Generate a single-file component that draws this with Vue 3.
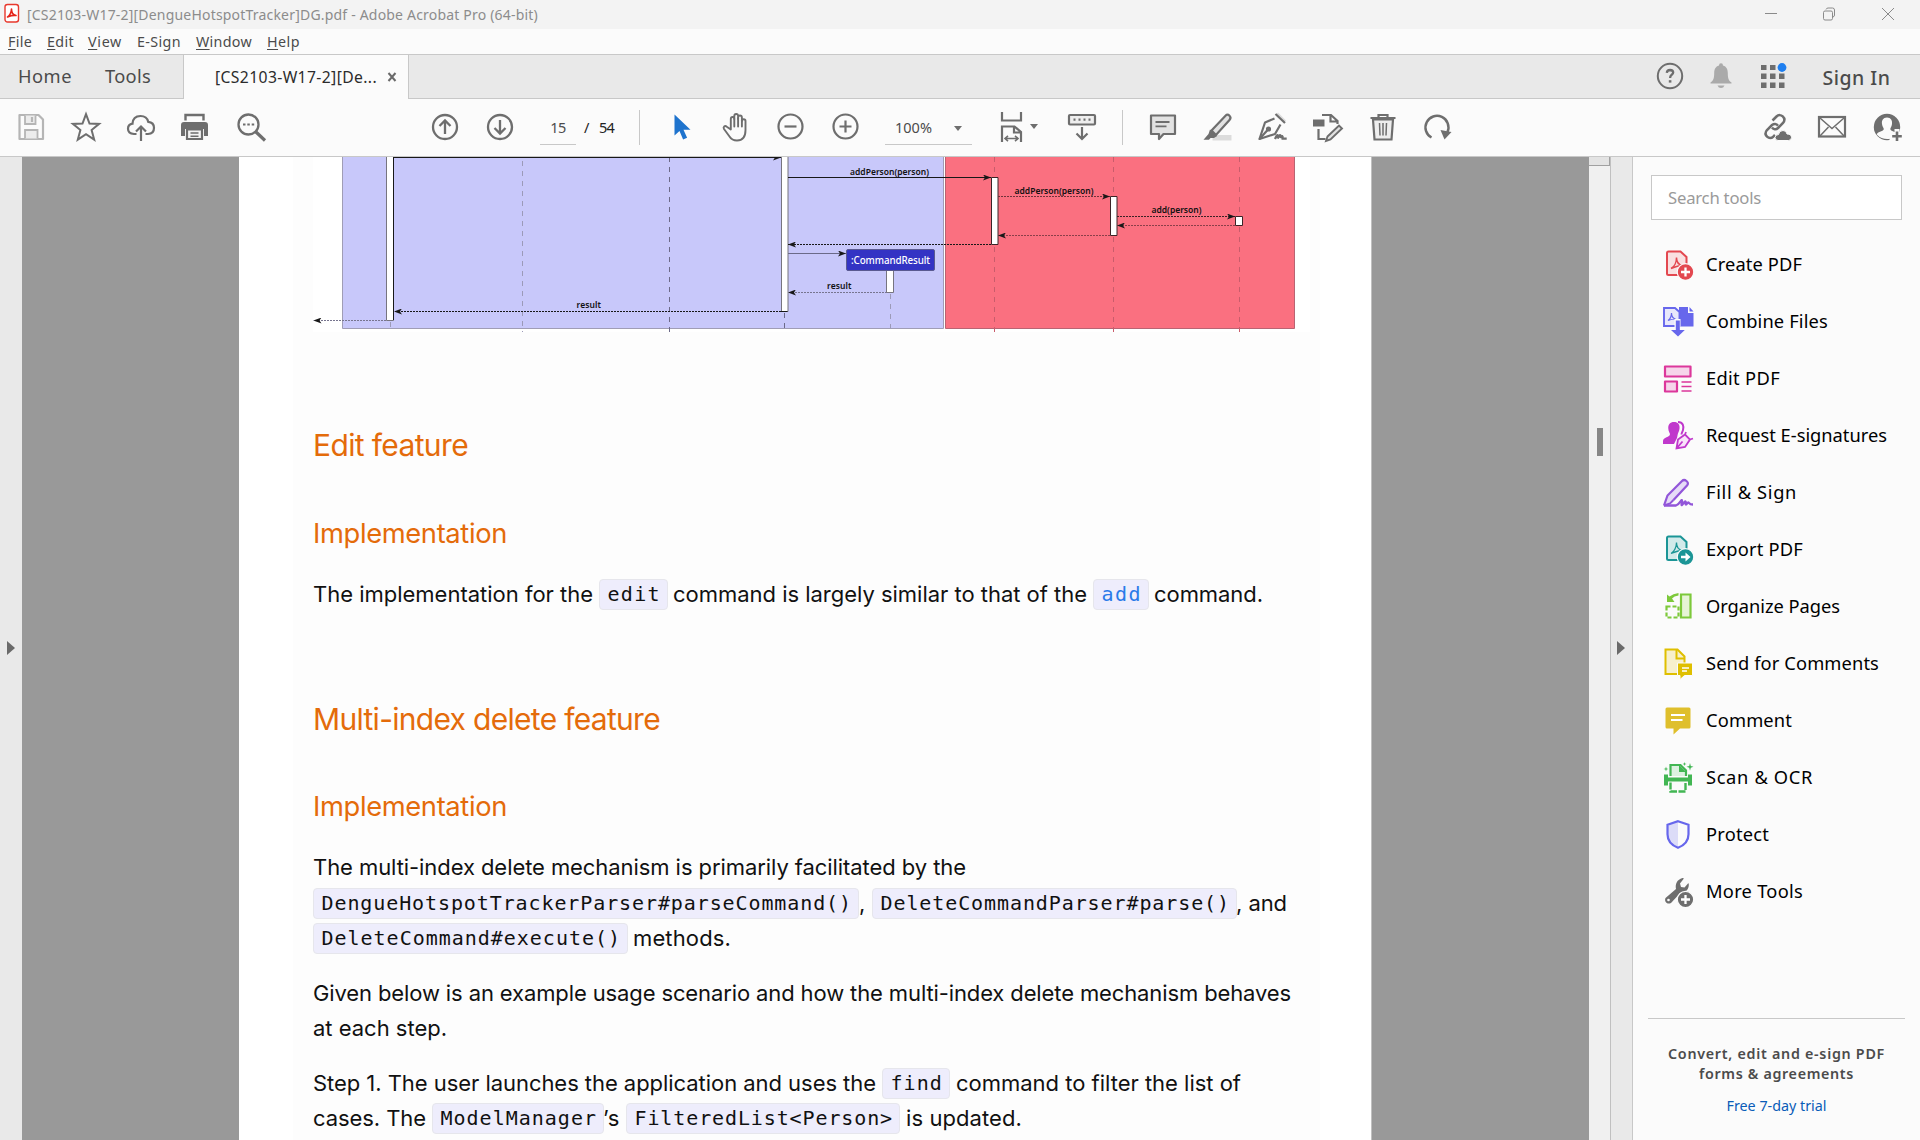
<script setup>
const menus = [
  { key: 'F', rest: 'ile', left: 8, w: 24 },
  { key: 'E', rest: 'dit', left: 47, w: 27 },
  { key: 'V', rest: 'iew', left: 88, w: 34 },
  { key: '', rest: 'E-Sign', left: 137, w: 44 },
  { key: 'W', rest: 'indow', left: 196, w: 56 },
  { key: 'H', rest: 'elp', left: 267, w: 33 },
]

const tools = [
  { id: 'create', label: 'Create PDF', w: 96 },
  { id: 'combine', label: 'Combine Files', w: 122 },
  { id: 'edit', label: 'Edit PDF', w: 74 },
  { id: 'request', label: 'Request E-signatures', w: 181 },
  { id: 'fill', label: 'Fill & Sign', w: 91 },
  { id: 'export', label: 'Export PDF', w: 97 },
  { id: 'organize', label: 'Organize Pages', w: 134 },
  { id: 'send', label: 'Send for Comments', w: 173 },
  { id: 'comment', label: 'Comment', w: 86 },
  { id: 'scan', label: 'Scan & OCR', w: 107 },
  { id: 'protect', label: 'Protect', w: 63 },
  { id: 'more', label: 'More Tools', w: 97 },
]

// Each run is { t: text, x: left edge, w: width, code?: chip, link?: blue text }.
const rows = {
  edit: [
    { t: 'The implementation for the', x: 313, w: 280 },
    { t: 'edit', x: 599, w: 69, code: true },
    { t: 'command is largely similar to that of the', x: 673, w: 414 },
    { t: 'add', x: 1093, w: 56, code: true, link: true },
    { t: 'command.', x: 1154, w: 109 },
  ],
  intro: [
    [{ t: 'The multi-index delete mechanism is primarily facilitated by the', x: 313, w: 653 }],
    [
      { t: 'DengueHotspotTrackerParser#parseCommand()', x: 313, w: 546, code: true },
      { t: ',', x: 859, w: 6 },
      { t: 'DeleteCommandParser#parse()', x: 872, w: 365, code: true },
      { t: ', and', x: 1236, w: 51 },
    ],
    [
      { t: 'DeleteCommand#execute()', x: 313, w: 315, code: true },
      { t: 'methods.', x: 633, w: 98 },
    ],
  ],
  given: [
    [{ t: 'Given below is an example usage scenario and how the multi-index delete mechanism behaves', x: 313, w: 978 }],
    [{ t: 'at each step.', x: 313, w: 134 }],
  ],
  step: [
    [
      { t: 'Step 1. The user launches the application and uses the', x: 313, w: 563 },
      { t: 'find', x: 882, w: 68, code: true },
      { t: 'command to filter the list of', x: 956, w: 285 },
    ],
    [
      { t: 'cases. The', x: 313, w: 113 },
      { t: 'ModelManager', x: 432, w: 172, code: true },
      { t: '’s', x: 603, w: 17 },
      { t: 'FilteredList<Person>', x: 626, w: 274, code: true },
      { t: 'is updated.', x: 906, w: 116 },
    ],
  ],
}

const paragraphs = [rows.intro, rows.given, rows.step]

const gapBefore = (row, i) => row[i].x - (i ? row[i - 1].x + row[i - 1].w : 313)

// Spreads letter-spacing so that a run fills exactly the width given.
const vFit = {
  mounted(el, { value }) {
    const range = document.createRange()
    range.selectNodeContents(el)
    const natural = range.getBoundingClientRect().width
    el.style.letterSpacing = `${((value - natural) / el.textContent.length).toFixed(3)}px`
  },
}
</script>

<template>
  <div class="app">
    <header class="titlebar">
      <svg class="logo" width="18" height="24" viewBox="0 0 18 24">
        <rect x="1" y="2.500" width="13.500" height="17.500" rx="2.5" fill="#fff" stroke="#e8382d" stroke-width="1.4" />
        <path d="M3.500 15c2-1 4-4.500 4-8 0 4 2 6 4.500 6.500-4-.5-6 .5-8.500 1.500z" fill="none" stroke="#e5251b" stroke-width="1.600" stroke-linejoin="round" />
      </svg>
      <span class="title"><span v-fit="511">[CS2103-W17-2][DengueHotspotTracker]DG.pdf - Adobe Acrobat Pro (64-bit)</span></span>
      <svg class="winbtns" width="140" height="29" viewBox="1760 0 140 29" fill="none" stroke="#8a8a8a">
        <path d="M1765 13.500h12" />
        <rect x="1823.500" y="11" width="9" height="9" rx="1.500" />
        <path d="M1826 9.500q.5-1.500 2-1.500h4.500q2 0 2 2v5q0 1.500-1.500 2" />
        <path d="M1882 8l12 12M1894 8l-12 12" />
      </svg>
    </header>

    <nav class="menubar">
      <span v-for="(m, i) in menus" :key="m.rest" class="menu" :style="{ marginLeft: (i ? m.left - menus[i - 1].left - menus[i - 1].w : m.left) + 'px', width: m.w + 'px' }"><span v-fit="m.w"><u v-if="m.key">{{ m.key }}</u>{{ m.rest }}</span></span>
    </nav>

    <div class="tabs">
      <div class="fixed-tabs">
        <span class="home"><span v-fit="54">Home</span></span>
        <span class="tooltab"><span v-fit="46">Tools</span></span>
      </div>
      <div class="doc-tab">
        <span class="doc-name"><span v-fit="162">[CS2103-W17-2][De...</span></span>
        <svg width="11" height="11" viewBox="0 0 11 11"><path d="M1.500 1l7 8M8.500 1l-7 8" stroke="#6a6a6a" stroke-width="2" /></svg>
      </div>
      <div class="tab-right">
        <svg class="help" width="28" height="28" viewBox="0 0 28 28" fill="none" stroke="#6e6e6e">
          <circle cx="14" cy="14" r="12.200" stroke-width="2" />
          <path d="M10.800 10.800q.2-2.800 3.300-2.800 3.100.1 3.100 2.600c0 1.900-3 2.300-3 4.700v.7" stroke-width="2.300" />
          <path d="M12.800 18.200h2.600v2.400h-2.600z" fill="#6e6e6e" stroke="none" />
        </svg>
        <svg class="bell" width="22" height="26" viewBox="0 0 22 26" fill="#aaa">
          <path d="M9 2.500q0-2.200 2-2.200t2 2.200c3.500 1 4.800 4 4.800 7.500 0 5 .7 7.500 3.700 9.500v1H.5v-1c3-2 3.700-4.500 3.700-9.500C4.200 6.500 5.500 3.500 9 2.500zM7.500 22.500h7q-1 2.600-3.500 2.600t-3.500-2.600z" />
        </svg>
        <svg class="grid" width="28" height="28" viewBox="0 0 28 28" fill="#6e6e6e">
          <path d="M1 4h5.500v5H1zM10 4h5.500v5H10zM1 12.500h5.500v5.500H1zM10 12.500h5.500v5.500H10zM19 12.500h5.500v5.500H19zM1 21.500h5.500v5.500H1zM10 21.500h5.500v5.500H10zM19 21.500h5.500v5.500H19z" />
          <circle cx="22" cy="6.500" r="4.400" fill="#1f7ff0" />
        </svg>
        <span class="signin"><span v-fit="68">Sign In</span></span>
      </div>
    </div>

    <div class="toolbar">
      <div class="icons file-icons">
        <svg viewBox="0 0 32 32" fill="none" stroke="#b5b5b5" stroke-width="2.200">
          <path d="M4.500 4h19l4.500 4.500V28H4.500z" stroke-linejoin="round" />
          <path d="M10 4.500v8.500h10.500V4.500M10 27.500V19h12.500v8.500" fill="#ececec" stroke-width="1.800" /><path d="M17 6v5" />
        </svg>
        <svg viewBox="0 0 32 32" fill="none" stroke="#6e6e6e" stroke-width="2"><path d="M16 3.200l3.500 9.300 9.600.4-7.500 6.100 2.600 9.600L16 23.200l-8.200 5.400L10.400 19l-7.500-6.100 9.600-.4z" /></svg>
        <svg viewBox="0 0 32 32" fill="none" stroke="#6e6e6e" stroke-width="2.200">
          <path d="M11.500 23H9q-6-.5-6-5.300 0-4.200 4.500-5C7.800 7.500 11 5 15.500 5c4.500 0 7 2.500 7.700 5.800 4 .4 5.800 2.800 5.800 6 0 4-2.500 6.200-6 6.200h-2.500" />
          <path d="M16 30V16.500M11 20.500l5-5 5 5" />
        </svg>
        <svg viewBox="0 0 32 32" fill="#6e6e6e">
          <path d="M1 14q0-3 3-3h21q3 0 3 3v11h-4v-7H5v7H1z" /><path d="M5.500 9.500V4h18v5.500" fill="none" stroke="#6e6e6e" stroke-width="2.400" />
          <path d="M7 18.500h15V28H7z" fill="#f4f4f4" stroke="#6e6e6e" stroke-width="2.200" /><path d="M10.500 22h8M10.500 25.200h8" stroke="#6e6e6e" stroke-width="1.400" />
        </svg>
        <svg viewBox="0 0 32 32" fill="none" stroke="#6e6e6e">
          <circle cx="13.500" cy="13.500" r="10" stroke-width="2.300" /><path d="M21 21l9 8.500" stroke-width="3.200" /><path d="M8 13.500h2.500M12.300 13.500h2.500M16.700 13.500h2.500" stroke-width="2.200" />
        </svg>
      </div>
      <div class="icons nav-icons">
        <svg viewBox="0 0 32 32" fill="none" stroke="#6e6e6e" stroke-width="2.300"><circle cx="16" cy="16" r="12" /><path d="M16 23V10M10.500 15l5.500-5.500 5.500 5.500" /></svg>
        <svg viewBox="0 0 32 32" fill="none" stroke="#6e6e6e" stroke-width="2.300"><circle cx="16" cy="16" r="12" /><path d="M16 9v13M10.500 17l5.500 5.500 5.500-5.500" /></svg>
      </div>
      <span class="page-input">15</span>
      <span class="slash">/</span>
      <span class="total">54</span>
      <i class="sep sep-a"></i>
      <div class="icons view-icons">
        <svg viewBox="0 0 32 32"><path d="M9.500 3.500v21l5-4.600 3.600 8.600 4-1.800-3.600-8h7z" fill="#1e73cd" /></svg>
        <svg viewBox="0 0 32 32" fill="none" stroke="#6e6e6e" stroke-width="1.900" stroke-linejoin="round" stroke-linecap="round">
          <path d="M10.800 18.500V8q0-2 1.800-2 1.700 0 1.700 2V5q0-2 1.900-2t1.900 2v3-1.500q0-2 1.900-2t1.900 2V10q0-1.800 1.800-1.800t1.800 1.800v9c0 7-3.500 10.500-8.500 10.500-4 0-6-1.500-7.500-4l-5.500-7.500c-1.200-2 .8-3.800 2.800-2.300z" />
          <path d="M14.300 8v7.500M18.100 7v8.500M21.900 9v6.500" />
        </svg>
        <svg viewBox="0 0 32 32" fill="none" stroke="#6e6e6e" stroke-width="2.200"><circle cx="15.500" cy="15.500" r="12" /><path d="M9.500 15.500h12" /></svg>
        <svg viewBox="0 0 32 32" fill="none" stroke="#6e6e6e" stroke-width="2.200"><circle cx="15.500" cy="15.500" r="12" /><path d="M9.500 15.500h12M15.500 9.500v12" /></svg>
      </div>
      <div class="zoom"><span class="pct"><span v-fit="37">100%</span></span><i class="caret"></i></div>
      <svg class="fit" width="24" height="32" viewBox="0 0 24 32" fill="none" stroke="#6e6e6e" stroke-width="2.200">
        <path d="M2 1v8.500h19V1M2 31V15.500h12.500L21 21v10M14 15.500v6h7" /><path d="M5.500 27.500h12M8 24.800l-3 2.700 3 2.700M15 24.800l3 2.700-3 2.700" stroke-width="1.600" />
      </svg>
      <i class="caret fit-caret"></i>
      <svg class="kbd" width="32" height="32" viewBox="0 0 32 32" fill="none" stroke="#6e6e6e" stroke-width="2.200">
        <rect x="3" y="4" width="26" height="9.500" rx="1" fill="#eee" /><path d="M7.500 8.700h2M12.500 8.700h2M17.500 8.700h2M22.500 8.700h2" /><path d="M16 16v11.500M10.500 22.500L16 28l5.500-5.500" />
      </svg>
      <i class="sep sep-b"></i>
      <div class="icons mark-icons">
        <svg viewBox="0 0 32 32" fill="#e2e2e2" stroke="#6e6e6e" stroke-width="2.200" stroke-linejoin="round"><path d="M4 4.500h24V23H16.500L12 28v-5H4z" /><path d="M8.500 11h14M8.500 15.300h11" stroke-width="1.800" /></svg>
        <svg viewBox="0 0 32 32"><path d="M10.500 24h19v5.500h-19z" fill="#dcdcdc" /><path d="M9.500 19.500L23.500 4.700q2-2 4 0t0 4.200L14 24z" fill="#e2e2e2" stroke="#6e6e6e" stroke-width="2.200" /><path d="M8 18.500l7 6.500-3 2H8.500L7 28.800H1.500L6.500 23z" fill="#6e6e6e" /></svg>
        <svg viewBox="0 0 32 32" fill="none" stroke="#6e6e6e" stroke-width="2.200"><path d="M19 3.500l8 8 2-2-8-8z" fill="#dcdcdc" stroke="none" /><path d="M18.500 3l9.500 9M17.500 7.500L8 11.500 2.500 28 18 23l5.500-9.500" stroke-linejoin="round" /><path d="M2.500 28l8.500-9.500" /><circle cx="11.500" cy="18" r="1.500" fill="#6e6e6e" /><path d="M18 28c2-5 3.500-5.500 2.700-.5 2-4.500 3.500-4.500 2.800-.5 1.500-3 2.500-2.500 2.200.7h4" /></svg>
        <svg viewBox="0 0 32 32" fill="none" stroke="#6e6e6e" stroke-width="2.200"><path d="M6.500 18v10h7M10 4h9l6.500 6v3M18.500 4v6.500h7" /><path d="M1 8.500h11.500V15.500H1z" fill="#6e6e6e" stroke="none" /><path d="M15.500 25.500L27 14.500l3 3L18.500 28.500 14 30z" fill="#e2e2e2" stroke-width="1.900" /></svg>
        <svg viewBox="0 0 32 32" fill="none" stroke="#6e6e6e" stroke-width="2.200"><path d="M6 8.500h20L24.500 28.500h-17z" fill="#eee" /><path d="M3.500 7h25M11.500 6.500V4h9v2.500" /><path d="M12.500 12l.5 12.500M16 12v12.500M19.500 12l-.5 12.500" stroke-width="1.500" /></svg>
        <svg viewBox="0 0 32 32" fill="none" stroke="#6e6e6e" stroke-width="2.500"><path d="M9.500 26.500A11.500 11.500 0 1 1 25.500 21" /><path d="M18.500 19l4 9.500 7-7.500z" fill="#6e6e6e" stroke="none" /></svg>
      </div>
      <div class="icons share-icons">
        <svg viewBox="0 0 32 32" fill="none" stroke="#6e6e6e" stroke-width="2.500"><path d="M11.500 9.500l4-4c4-4 10.500 1.500 6.500 6.500l-5 5c-2 2-4.500 1.500-6-.5" /><path d="M14 24l-1.500 1.500c-4.500 4-10.500-1.500-6.500-6.500l5-5c2-1.500 4.500-1.500 6 .7" /><path d="M17 29.500q-3-.2-3-3t3.500-3q.5-4 4.500-4 3.500 0 4 3.500 4.500 0 4.500 3.500 0 2.800-3 3z" fill="#6e6e6e" stroke="#fbfbfb" stroke-width="1" /></svg>
        <svg viewBox="0 0 32 32" fill="none" stroke="#6e6e6e" stroke-width="2.200"><rect x="3" y="6" width="26" height="19.500" /><path d="M4 7l12 10.500L28 7M4 25l8.500-9M28 25l-8.500-9" stroke-width="1.500" /></svg>
        <svg viewBox="0 0 32 32"><circle cx="16" cy="16" r="13.200" fill="#6e6e6e" /><path d="M16 6.500c4 0 5.500 3 5 6.500-.3 2.500-1.500 3.500-1.700 5 0 2.500 6 2 7 5.500-3 4-6 4.500-10 4.500s-7.500-1-10.500-4.500c1-3.500 7-3 7-5.500-.2-1.500-1.500-2.500-1.800-5-.5-3.500 1-6.500 5-6.500z" fill="#fbfbfb" /><path d="M18.500 23h5v-5h5v3h4v11h-14z" fill="#fbfbfb" /><path d="M26 20.500v9.500M21.200 25.200h9.600" stroke="#6e6e6e" stroke-width="2.600" /></svg>
      </div>
    </div>

    <main class="body">
      <aside class="left-rail"><i class="tri"></i></aside>
      <section class="canvas">
        <article class="page">
          <div class="sheet">
            <svg class="diagram" width="997" height="175" viewBox="313 157 997 175" font-family="'Noto Sans', 'Open Sans', sans-serif" font-size="8.500" font-weight="600">
              <defs>
                <marker id="tip" viewBox="0 0 8 6" refX="8" refY="3" markerWidth="8" markerHeight="6" markerUnits="userSpaceOnUse" orient="auto">
                  <path d="M0 0L8 3 0 6l2-3z" fill="#181818" />
                </marker>
              </defs>
              <path d="M313 157h997v175H313z" fill="#fff" />
              <path d="M342.500 150h601v178.500h-601z" fill="#c8c8fa" stroke="#a09db5" />
              <path d="M945.500 150h349v178.500h-349z" fill="#fa7080" stroke="#b96473" />
              <g stroke="#6c6a88" stroke-dasharray="5 5" fill="none">
                <path d="M390.500 322v10M522.500 161v171M890.500 294v38" stroke="#9c9ab8" />
                <path d="M669.500 157v175M784.500 313v19" />
                <path d="M994.500 157v175M1113.500 157v175M1239.500 157v175" stroke="#c95c6b" />
              </g>
              <g fill="#fff" stroke="#77757f">
                <path d="M386.500 150h7v170.500h-7zM781.500 150h6.500v161.500h-6.500zM886.500 268h7v24.500h-7z" />
                <path d="M991.500 177.500h6.500v67h-6.500zM1110.500 196.500h6.500v39h-6.500zM1235.500 216.500h7v9h-7z" stroke="#3c2428" />
              </g>
              <g fill="none" stroke="#181818">
                <path d="M393.500 157v163" />
                <path d="M393 157.500h388" marker-end="url(#tip)" />
                <path d="M788 177.500h203" marker-end="url(#tip)" />
                <path d="M788 253.500h58" stroke="#6b6a88" marker-end="url(#tip)" />
                <path d="M781 311.500h6.500" />
                <g stroke-dasharray="2 1">
                  <path d="M998 196.500h112" marker-end="url(#tip)" stroke="#70333b" />
                  <path d="M1117 216.500h118" marker-end="url(#tip)" stroke="#3a2226" />
                  <path d="M1235 225.500h-118" marker-end="url(#tip)" stroke="#8a3f4a" />
                  <path d="M1110 235.500H998" marker-end="url(#tip)" stroke="#8a3f4a" />
                  <path d="M991 244.500H788" marker-end="url(#tip)" />
                  <path d="M887 292.500h-99" marker-end="url(#tip)" stroke="#77758f" />
                  <path d="M781 311.500H394" marker-end="url(#tip)" />
                  <path d="M386 320.500h-72.500" marker-end="url(#tip)" stroke="#77758f" />
                </g>
              </g>
              <rect x="846.500" y="249.500" width="88" height="21" rx="1.500" fill="#3333c4" stroke="#5a5a90" />
              <g fill="#111">
                <text x="850" y="174.500" textLength="79">addPerson(person)</text>
                <text x="1014.500" y="193.800" textLength="79">addPerson(person)</text>
                <text x="1151.500" y="213" textLength="50">add(person)</text>
                <text x="827" y="288.700" textLength="24.500">result</text>
                <text x="576.500" y="308" textLength="24.500">result</text>
              </g>
              <text x="851" y="263.500" textLength="79" fill="#fff" font-size="9.800" font-weight="500">:CommandResult</text>
            </svg>

            <h2 class="h-edit"><span v-fit="155">Edit feature</span></h2>
            <h3 class="h-impl"><span v-fit="194">Implementation</span></h3>
            <div class="row first">
              <span v-for="(s, i) in rows.edit" :key="i" :class="{ run: true, chip: s.code, link: s.link }" :style="{ width: s.w + 'px', marginLeft: gapBefore(rows.edit, i) + 'px' }"><span v-fit="s.code ? s.w - 15.500 : s.w">{{ s.t }}</span></span>
            </div>
            <h2 class="h-multi"><span v-fit="347">Multi-index delete feature</span></h2>
            <h3><span v-fit="194">Implementation</span></h3>
            <div v-for="(p, k) in paragraphs" :key="k" class="para">
              <div v-for="(row, r) in p" :key="r" class="row">
                <span v-for="(s, i) in row" :key="i" :class="{ run: true, chip: s.code }" :style="{ width: s.w + 'px', marginLeft: gapBefore(row, i) + 'px' }"><span v-fit="s.code ? s.w - 15.500 : s.w">{{ s.t }}</span></span>
              </div>
            </div>
          </div>
        </article>
      </section>
      <div class="scroll"><i class="cap"></i><i class="grip"></i></div>
      <div class="right-rail"><i class="tri"></i></div>
      <aside class="panel">
        <div class="search"><span v-fit="93">Search tools</span></div>
        <ul class="tools">
          <li v-for="t in tools" :key="t.id">
            <svg width="32" height="32" viewBox="0 0 32 32" fill="none">
              <template v-if="t.id === 'create'">
                <path d="M5 4q0-1.500 1.500-1.500h12L24.500 8v18H6.500Q5 26 5 24.500z" fill="#f9e0e1" stroke="#e34850" stroke-width="2" />
                <path d="M9 19.500c3-1.500 5.500-6 5.500-11 0 5 3 7.500 6 8-4 0-8 1.500-11.500 3z" stroke="#e34850" stroke-width="1.500" />
                <circle cx="23.500" cy="23" r="8.300" fill="#e34850" stroke="#fbfbfb" stroke-width="1.200" /><path d="M23.500 18.500v9M19 23h9" stroke="#fff" stroke-width="2.300" />
              </template>
              <template v-else-if="t.id === 'combine'">
                <path d="M17 1h9v6h5.500v13.500H17z" fill="#6767ec" /><path d="M27.500 1l4 4.500h-4z" fill="#6767ec" />
                <path d="M2 2h11l4.500 4v14H2z" fill="#e8e8fb" stroke="#6767ec" stroke-width="1.900" /><path d="M6 14.500c2-1.500 3.500-4 3.500-7.500 0 3.500 2 5.500 4 6-3 0-5 .5-7.500 1.500z" stroke="#6767ec" stroke-width="1.200" />
                <path d="M12.500 13h6v10.500h6.500l-9.500 9-9.500-9h6.500z" fill="#fbfbfb" /><path d="M13.800 14.500h4v9.500h5L16 30.500 9 24h4.800z" fill="#6767ec" />
              </template>
              <template v-else-if="t.id === 'edit'">
                <path d="M3 3.500h25.500V13.500H3zM3 18.500h12v10H3z" fill="#f6d5ea" stroke="#dc379b" stroke-width="2.200" stroke-linejoin="round" /><path d="M19.500 19h10M19.500 23.500h10M19.500 28h10" stroke="#dc379b" stroke-width="1.400" />
              </template>
              <template v-else-if="t.id === 'request'">
                <path d="M12 2c4 0 6 2.500 5.500 6.500-.3 3-1.500 4-1.800 6l-.7 3.500-3 6H1v-3c0-4 7-3.500 7-7-.5-1.500-1.500-2.500-1.700-5.500C6 4.500 8 2 12 2z" fill="#c038cc" /><path d="M16 2c5 0 6 4 5 8-.5 2-1.500 3-1.500 4.500" stroke="#c038cc" stroke-width="2" />
                <path d="M14.500 28.500L16 19.500l7-5 5 5-5 7.500zM14.500 28.500l6-7M23 14.500l1-2.500M28 19.500l3-1" fill="#f9e3fa" stroke="#c038cc" stroke-width="1.800" />
              </template>
              <template v-else-if="t.id === 'fill'">
                <path d="M2 28.500l3.500-10L20 4q2-2 4.500 0t.5 4.500L11.500 23" fill="#e6dbf7" stroke="#9256d9" stroke-width="2.200" /><path d="M2 28.500l6-2 3.500-3.500" stroke="#9256d9" stroke-width="2" />
                <path d="M2 28.500h12c4-1 6-8.500 6-4 0 1.500-1 4 0 3.500s2.500-4 3.500-3.500-.5 3 .5 3 1.500-2.500 2.500-2 .5 2 4.500 2" stroke="#9256d9" stroke-width="2.300" />
              </template>
              <template v-else-if="t.id === 'export'">
                <path d="M5 4q0-1.500 1.500-1.500h12L24.500 8v18H6.500Q5 26 5 24.500z" fill="#d2eaea" stroke="#1b9596" stroke-width="2" />
                <path d="M9 19.500c3-1.500 5.500-6 5.500-11 0 5 3 7.500 6 8-4 0-8 1.500-11.500 3z" stroke="#1b9596" stroke-width="1.300" />
                <circle cx="23.500" cy="23" r="8.300" fill="#1b9596" stroke="#fbfbfb" stroke-width="1.200" /><path d="M19 21.700h4.500V18.500l5 4.500-5 4.500v-3.200H19z" fill="#fff" />
              </template>
              <template v-else-if="t.id === 'organize'">
                <path d="M19 3.500h9.500v23H19z" fill="#e6f4d6" stroke="#7dc93b" stroke-width="2.200" /><path d="M4.500 15.500h12v11h-12z" stroke="#7dc93b" stroke-width="2.200" stroke-dasharray="4 2" />
                <path d="M5 3.500l2.500 2q3.500-3 9-3.500v2.500q-4.500.5-6.500 3l2.500 3.500H5z" fill="#7dc93b" />
              </template>
              <template v-else-if="t.id === 'send'">
                <path d="M3.500 1.500h12l7 7v17.500h-19z" fill="#f7f0cd" stroke="#dfbf00" stroke-width="2" /><path d="M14.500 2v8.500h8" stroke="#dfbf00" stroke-width="2" />
                <path d="M15.500 15h15v12.500h-8l-4.500 4v-4h-2.500z" fill="#dfbf00" stroke="#fbfbfb" /><path d="M20 20h7M20 23h5" stroke="#fff" stroke-width="1.300" />
              </template>
              <template v-else-if="t.id === 'comment'">
                <path d="M5 2.500h22q1.500 0 1.500 1.500v18q0 1.500-1.500 1.500h-9l-6.500 6v-6H5q-1.500 0-1.500-1.500V4Q3.500 2.500 5 2.500z" fill="#dfbf2c" /><path d="M9 10h14M9 15h11.500" stroke="#fff" stroke-width="2" />
              </template>
              <template v-else-if="t.id === 'scan'">
                <path d="M8.500 14V3h10L24 8.500V14" fill="#dcf1e0" stroke="#42b653" stroke-width="2.200" /><path d="M17 3v7h7z" fill="#42b653" />
                <path d="M2 12.500h4v3h20v-3h4v11h-4v-4H6v4H2z" fill="#42b653" /><path d="M8.500 20.500v9h15v-9" stroke="#42b653" stroke-width="2.400" stroke-dasharray="7 1.500" />
                <path d="M28 1l.8 3 2.700.8-2.700.9-.8 3-.8-3-2.700-.9 2.700-.8zM22.500 0l.5 1.500 1.500.5-1.500.5-.5 1.500-.5-1.500-1.500-.5 1.500-.5zM4 4.500l.6 1.900 1.900.6-1.900.6L4 9.500l-.6-1.900L1.500 7l1.900-.6z" fill="#42b653" />
              </template>
              <template v-else-if="t.id === 'protect'">
                <path d="M16 3v25.500c-7-2.500-10.500-7-10.500-14V5.500z" fill="#dcdcf8" /><path d="M16 2.200l10.500 3.500v9.500c0 6.500-4 11-10.500 13.500-6.500-2.500-10.500-7-10.500-13.500V5.700z" stroke="#6767ec" stroke-width="2.200" />
              </template>
              <template v-else>
                <path d="M3.500 22L14 13c-1-5 1-9.500 6.500-11 1 0 1.500.5 1 1l-3.500 4.500 1 3.500 3.500.5L26 7.500q.7-.5.8.8C27 13 24 17 18.500 16.800L9 27c-4 2-7-1.500-5.500-5z" fill="#6e6e6e" /><circle cx="6.500" cy="24" r="1.300" fill="#fbfbfb" />
                <circle cx="23.500" cy="23.500" r="8.200" fill="#6e6e6e" stroke="#fbfbfb" stroke-width="1.200" /><path d="M23.500 19v9M19 23.500h9" stroke="#fff" stroke-width="2.300" />
              </template>
            </svg>
            <span class="tool-name"><span v-fit="t.w">{{ t.label }}</span></span>
          </li>
        </ul>
        <div class="promo">
          <b><span v-fit="217">Convert, edit and e-sign PDF</span></b>
          <b><span v-fit="155">forms &amp; agreements</span></b>
          <a><span v-fit="100">Free 7-day trial</span></a>
        </div>
      </aside>
    </main>
  </div>
</template>

<style>
body { margin: 0; }
</style>

<style scoped>
.app { width: 1920px; height: 1140px; overflow: hidden; display: flex; flex-direction: column; background: #fbfbfb; font-family: "Noto Sans", "Open Sans", sans-serif; color: #4b4b4b; white-space: nowrap; }
.app svg { flex: none; display: block; }
.app span { white-space: nowrap; }

.titlebar { height: 29px; flex: none; display: flex; background: #f3f3f3; }
.logo { margin: 2px 0 0 4px; }
.title { margin-left: 5px; width: 1733px; font-size: 14px; line-height: 29px; color: #8c8c8c; }

.menubar { height: 25px; flex: none; display: flex; border-bottom: 1px solid #c8c8c8; background: #fbfbfb; }
.menu { font-size: 14.300px; line-height: 25px; }
.menu u { text-underline-offset: 2px; text-decoration-thickness: 1px; }

.tabs { height: 44px; flex: none; display: flex; background: #e9e9e9; }
.fixed-tabs { width: 183px; display: flex; border-bottom: 1px solid #c8c8c8; box-sizing: border-box; font-size: 18.300px; line-height: 41px; }
.home { margin-left: 18px; width: 54px; }
.tooltab { margin-left: 33px; }
.doc-tab { width: 224px; border: solid #c8c8c8; border-width: 0 1px; background: #fbfbfb; display: flex; align-items: center; }
.doc-name { margin-left: 31px; width: 172px; font-size: 15.700px; line-height: 44px; color: #2c2c2c; }
.tab-right { flex: 1; display: flex; align-items: center; border-bottom: 1px solid #c8c8c8; }
.help { margin: 0 0 2px 1247px; }
.bell { margin: 0 0 1px 26px; }
.grid { margin: 0 0 4px 27.500px; }
.signin { margin: 2px 0 0 35px; font-size: 19.500px; font-weight: 500; }

.toolbar { height: 57px; flex: none; display: flex; align-items: center; border-bottom: 1px solid #c8c8c8; padding-bottom: 2px; box-sizing: content-box; height: 55px; background: #fbfbfb; }
.icons { display: flex; gap: 23px; flex: none; }
.icons svg { width: 32px; height: 32px; }
.file-icons { margin-left: 15px; }
.nav-icons { margin-left: 162px; }
.page-input { margin: 4px 0 0 24px; width: 36px; height: 32px; border-bottom: 1px solid #c8c8c8; font-size: 14.500px; line-height: 31px; text-align: center; letter-spacing: -.5px; }
.slash { margin-left: 8px; width: 7px; font-size: 14.500px; color: #222; }
.total { margin-left: 8px; width: 16px; font-size: 14.500px; color: #222; letter-spacing: -.7px; }
.sep { width: 1px; height: 35px; background: #c8c8c8; flex: none; margin-top: 2px; }
.sep-a { margin-left: 24px; }
.view-icons { margin-left: 25px; }
.zoom { margin: 4px 0 0 23px; width: 87px; height: 32px; flex: none; border-bottom: 1px solid #c8c8c8; display: flex; align-items: center; font-size: 14.500px; line-height: 31px; }
.pct { margin: -2px 0 0 10px; width: 59px; }
.caret { width: 0; height: 0; flex: none; border: solid transparent; border-width: 5px 4.500px 0; border-top-color: #6e6e6e; }
.fit { margin-left: 28px; }
.fit-caret { margin-left: 6px; }
.kbd { margin-left: 28px; }
.sep-b { margin-left: 24px; }
.mark-icons { margin-left: 24px; }
.share-icons { margin-left: 307px; }

.body { flex: 1; min-height: 0; display: flex; }
.left-rail { width: 22px; flex: none; display: flex; align-items: center; background: #e9e9e9; }
.tri { width: 0; height: 0; border: solid transparent; border-width: 7px 0 7px 8px; border-left-color: #6a6a6a; margin: 0 0 2px 7px; }
.canvas { width: 1567px; flex: none; padding-left: 217px; box-sizing: border-box; background: #999; overflow: hidden; }
.page { width: 1133px; height: 100%; padding: 0 51px 0 54px; box-sizing: border-box; background: #fff; border-right: 1px solid #c0c0c0; }
.sheet { height: 100%; padding-left: 20px; background: #fdfdfd; color: #111; font-family: Inter, "Liberation Sans", sans-serif; font-size: 22px; overflow: hidden; }
.app .diagram { display: block; }
h2, h3 { margin: 0; height: 40px; line-height: 40px; font-weight: 400; color: #e46b0a; }
h2 { font-size: 30px; }
h3 { font-size: 27.300px; margin-top: 48px; }
.h-edit { margin-top: 93px; }
.h-impl { margin-top: 49px; }
.h-multi { margin-top: 87.500px; }
.row { height: 35.300px; display: flex; align-items: center; line-height: 35px; }
.row.first { margin-top: 22.500px; }
.para { margin-top: 19.400px; }
h3 + .para { margin-top: 23px; }
.run { flex: none; }
.chip { box-sizing: border-box; height: 31px; line-height: 29px; padding-left: 7.500px; border: 1px solid #e6e6ec; border-radius: 4px; background: #eeedfc; font-family: "DejaVu Sans Mono", "Liberation Mono", monospace; font-size: 20px; }
.link { color: #2a7ae9; }

.scroll { width: 21px; flex: none; border-right: 1px solid #c0c0c0; background: #f0f0f0; display: flex; flex-direction: column; box-sizing: content-box; }
.cap { height: 8px; border: solid #a0a0a0; border-width: 0 1px 1px 0; background: #e3e3e3; }
.grip { width: 6px; height: 28px; margin: 262px 0 0 8px; background: #868686; }
.right-rail { width: 21px; flex: none; display: flex; align-items: center; border-right: 1px solid #c8c8c8; background: #e9e9e9; }
.right-rail .tri { margin-left: 6px; }
.panel { flex: 1; background: #fbfbfb; display: flex; flex-direction: column; }
.search { margin: 18px 18px 0; height: 43px; padding-left: 16px; border: 1px solid #c8c8c8; background: #fff; font-size: 16.700px; line-height: 44px; color: #9a9a9a; }
.tools { list-style: none; margin: 16px 0 0; padding: 0; }
.tools li { height: 57px; display: flex; align-items: center; padding-left: 29px; }
.tool-name { margin: -1px 0 0 12px; font-size: 18.300px; color: #000; line-height: 24px; }
.promo { margin: 98px 15px 0; border-top: 1px solid #c8c8c8; padding-top: 25px; display: flex; flex-direction: column; align-items: center; font-size: 14.300px; }
.promo b { font-weight: 600; line-height: 20px; }
.promo a { margin-top: 12px; line-height: 20px; color: #0a5cb8; }
</style>
